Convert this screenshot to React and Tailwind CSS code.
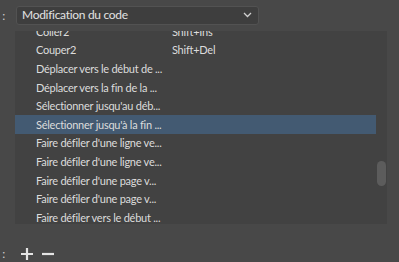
export default function App() {
  const rows = [
    ["Coller2", "Shift+Ins"],
    ["Couper2", "Shift+Del"],
    ["Déplacer vers le début de ...", ""],
    ["Déplacer vers la fin de la ...", ""],
    ["Sélectionner jusqu'au déb...", ""],
    ["Sélectionner jusqu'à la fin ...", ""],
    ["Faire défiler d'une ligne ve...", ""],
    ["Faire défiler d'une ligne ve...", ""],
    ["Faire défiler d'une page v...", ""],
    ["Faire défiler d'une page v...", ""],
    ["Faire défiler vers le début ...", ""],
  ];
  return (
    <div className="w-[399px] h-[262px] bg-[#484848] overflow-hidden text-[#dcdcdc]" style={{ fontFamily: "Lato, 'Noto Sans', sans-serif" }}>
      <div className="flex items-center h-[31px]">
        <span className="w-[22px] text-[12px] -ml-[6px] text-[#cfcfcf]">s :</span>
        <div className="flex items-center justify-between w-[243px] h-[19px] -mt-[1px] rounded-[3px] bg-[#3e3e3e] border border-[#525252] pl-[5px] pr-[6px]">
          <span className="text-[12px] tracking-[-0.3px] leading-none text-[#e2e2e2]">Modification du code</span>
          <svg width="9" height="6" viewBox="0 0 9 6">
            <path d="M1 1 L4.5 4.5 L8 1" stroke="#d0d0d0" strokeWidth="1.3" fill="none" />
          </svg>
        </div>
      </div>
      <div className="relative ml-[15px] w-[372px] h-[193px] bg-[#424242] overflow-hidden">
        <div className="-mt-[9px]">
          {rows.map((r, i) => (
            <div key={i} className={`flex items-center h-[18.6px] text-[11px] tracking-[-0.25px] leading-none w-[361px] ${i === 5 ? "bg-[#435a72]" : ""}`}>
              <span className="ml-[21px] w-[136px] whitespace-nowrap">{r[0]}</span>
              <span className="whitespace-nowrap">{r[1]}</span>
            </div>
          ))}
        </div>
        <div className="absolute left-[362px] top-[130px] w-[9px] h-[25px] rounded-full bg-[#5c5c5c]"></div>
      </div>
      <div className="flex items-center mt-[23px]">
        <span className="text-[12px] -ml-[6px] w-[26px] leading-none text-[#cfcfcf]">s :</span>
        <svg width="14" height="14" viewBox="0 0 14 14">
          <path d="M7 1 V13 M1 7 H13" stroke="#e4e4e4" strokeWidth="2.2" />
        </svg>
        <svg width="14" height="14" viewBox="0 0 14 14" className="ml-[7px]">
          <path d="M1 7 H13" stroke="#e4e4e4" strokeWidth="2.2" />
        </svg>
      </div>
    </div>
  );
}
